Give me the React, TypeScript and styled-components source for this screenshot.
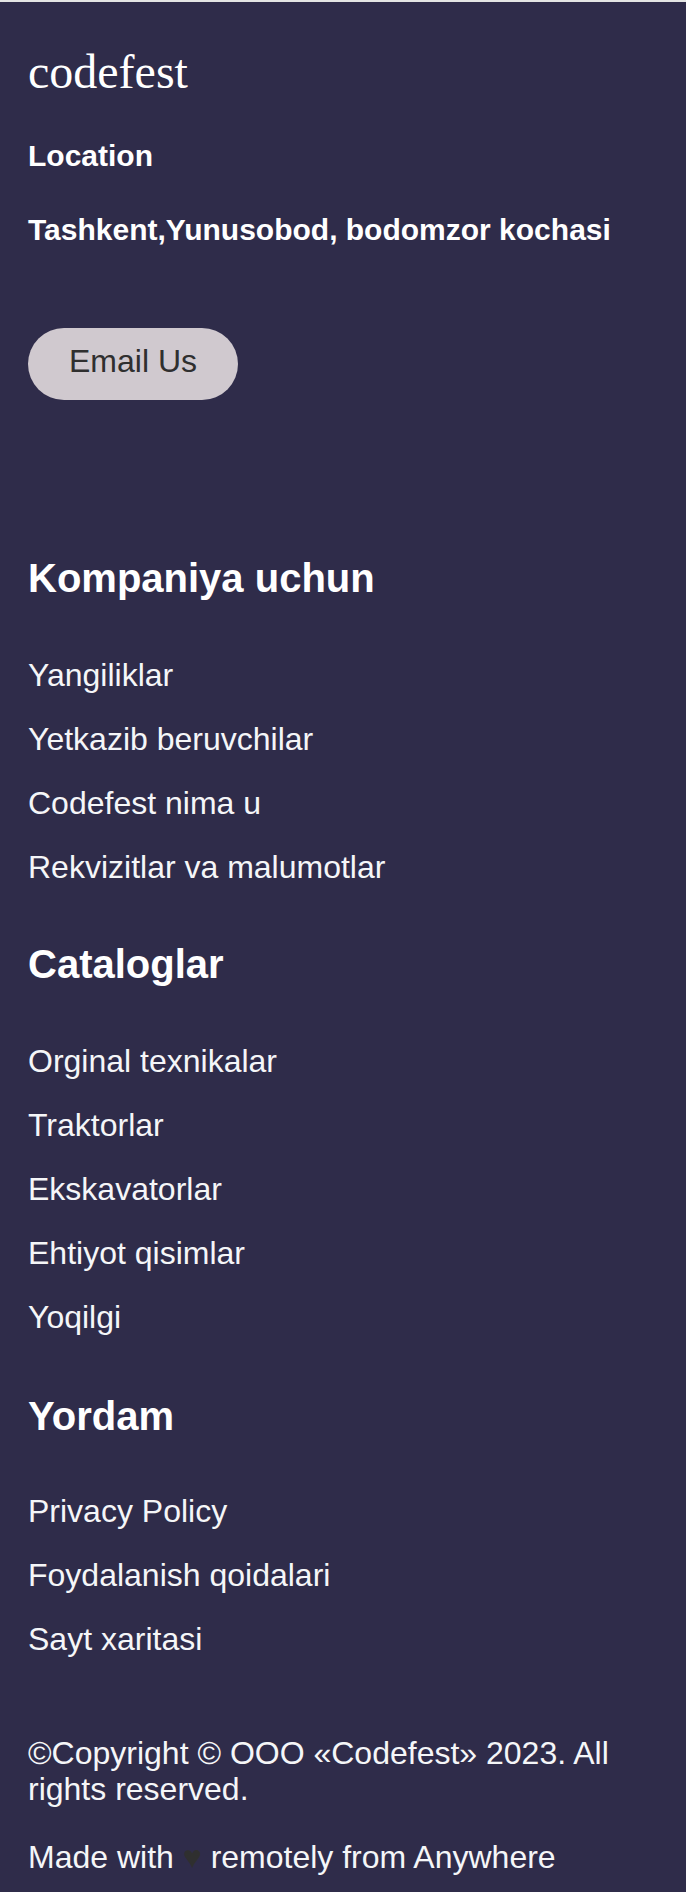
import React from 'react';
import styled, { createGlobalStyle } from 'styled-components';

const Global = createGlobalStyle`
  * { box-sizing: border-box; margin: 0; padding: 0; }
  body { background: #2f2c4a; font-family: "Liberation Sans", Arial, sans-serif; }
`;
const Footer = styled.footer`
  height: 1892px;
  overflow: hidden;
  padding: 43px 28px 0;
  border-top: 2px solid #e4e5e4;
  background: #2f2c4a;
  color: #fff;
`;
const Logo = styled.div`
  font: 48px/53px "Liberation Serif", serif;
`;
const Address = styled.p`
  margin-top: 41px;
  font-size: 30px;
  font-weight: 700;
  line-height: 33px;
`;
const EmailButton = styled.button`
  display: block;
  width: 210px;
  height: 72px;
  margin-top: 82px;
  padding-bottom: 6px;
  border: 0;
  border-radius: 36px;
  background: #d0c9cf;
  color: #2f2f2f;
  font: 32px/36px "Liberation Sans", Arial, sans-serif;
`;
const Section = styled.section<{ $gap: number }>`
  margin-top: ${p => p.$gap}px;
`;
const Title = styled.h2`
  font-size: 40px;
  line-height: 46px;
`;
const List = styled.ul<{ $gap: number }>`
  display: grid;
  gap: 28px;
  margin-top: ${p => p.$gap}px;
  list-style: none;
  color: #f5f6f8;
  font-size: 32px;
  line-height: 36px;
`;
const Note = styled.p<{ $gap: number }>`
  margin-top: ${p => p.$gap}px;
  color: #f5f6f8;
  font-size: 32px;
  line-height: 36px;
`;
const Heart = styled.span`
  color: #2f2f2f;
`;

const sections = [
  { title: 'Kompaniya uchun', gap: 155, listGap: 56, items: ['Yangiliklar', 'Yetkazib beruvchilar', 'Codefest nima u', 'Rekvizitlar va malumotlar'] },
  { title: 'Cataloglar', gap: 56, listGap: 56, items: ['Orginal texnikalar', 'Traktorlar', 'Ekskavatorlar', 'Ehtiyot qisimlar', 'Yoqilgi'] },
  { title: 'Yordam', gap: 58, listGap: 54, items: ['Privacy Policy', 'Foydalanish qoidalari', 'Sayt xaritasi'] },
];

export default function App() {
  return (
    <>
      <Global />
      <Footer>
        <Logo>codefest</Logo>
        <Address>Location</Address>
        <Address>Tashkent,Yunusobod, bodomzor kochasi</Address>
        <EmailButton>Email Us</EmailButton>
        {sections.map(s => (
          <Section key={s.title} $gap={s.gap}>
            <Title>{s.title}</Title>
            <List $gap={s.listGap}>{s.items.map(i => <li key={i}>{i}</li>)}</List>
          </Section>
        ))}
        <Note $gap={78}>©Copyright © OOO «Codefest» 2023. All rights reserved.</Note>
        <Note $gap={32}>Made with <Heart>♥</Heart> remotely from Anywhere</Note>
      </Footer>
    </>
  );
}
